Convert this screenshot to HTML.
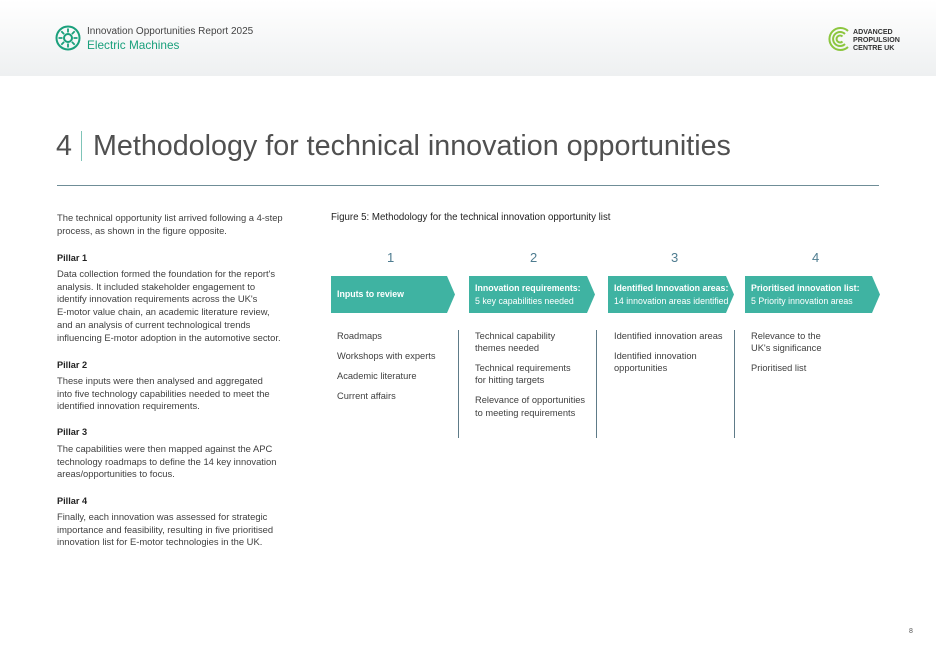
<!DOCTYPE html>
<html><head><meta charset="utf-8"><style>
*{margin:0;padding:0;box-sizing:border-box}
body{width:936px;height:662px;position:relative;background:#fff;font-family:"Liberation Sans",sans-serif;color:#3a3a3a;overflow:hidden}
.hdr{position:absolute;left:0;top:0;width:936px;height:76px;background:linear-gradient(#fff,#eef0f1)}
.a{position:absolute}
.t{font-size:9.4px;line-height:12.7px;color:#3f3f3f}
.i{font-size:9.3px;line-height:12px;color:#3f3f3f}
.b{font-weight:bold;font-size:9.2px;color:#222}
.arr{position:absolute;top:276px;height:37px;background:#3fb3a2;color:#fff;font-size:8.8px;font-weight:bold;line-height:13px;padding-left:6px;display:flex;flex-direction:column;justify-content:center;clip-path:polygon(0 0,calc(100% - 8px) 0,100% 50%,calc(100% - 8px) 100%,0 100%);white-space:nowrap}
.arr span{font-weight:normal}
.num{position:absolute;top:250px;font-size:13px;color:#4e7c90}
.vl{position:absolute;top:330px;height:108px;width:1px;background:#5e7b88}
</style></head><body>
<div class="hdr"></div>
<svg class="a" style="left:55px;top:25px" width="26" height="26" viewBox="0 0 26 26" fill="none" stroke="#1aa07c" stroke-width="2"><circle cx="13" cy="13" r="11.5"/><circle cx="13" cy="13" r="4"/><g stroke-width="1.8"><path d="M13 3.5v4M13 18.5v4M3.5 13h4M18.5 13h4M6.3 6.3l2.8 2.8M16.9 16.9l2.8 2.8M6.3 19.7l2.8-2.8M16.9 9.1l2.8-2.8"/></g></svg>
<div class="a" style="left:87px;top:26px;font-size:10px;color:#444">Innovation Opportunities Report 2025</div>
<div class="a" style="left:87px;top:38px;font-size:11.8px;color:#1aa07c">Electric Machines</div>
<svg class="a" style="left:826px;top:26px" width="26" height="26" viewBox="0 0 26 26" fill="none" stroke="#8cc63f" stroke-width="2"><path d="M22 5A11 11 0 1 0 22 21"/><path d="M19 8A7 7 0 1 0 19 18"/><path d="M16.5 10.5A3.5 3.5 0 1 0 16.5 15.5"/></svg>
<div class="a" style="left:853px;top:28px;font-size:7.1px;line-height:8px;color:#333;font-weight:bold">ADVANCED<br>PROPULSION<br>CENTRE UK</div>
<div class="a" style="left:56px;top:130px;font-size:28.7px;color:#505050">4</div>
<div class="a" style="left:81px;top:131px;width:1px;height:30px;background:#7fc4b8"></div>
<div class="a" style="left:93px;top:130px;font-size:28.7px;color:#505050">Methodology for technical innovation opportunities</div>
<div class="a" style="left:57px;top:185px;width:822px;height:1px;background:#6f8d97"></div>
<div class="a t" style="left:57px;top:212px;width:232px">The technical opportunity list arrived following a 4-step process, as shown in the figure opposite.</div>
<div class="a b" style="left:57px;top:253px">Pillar 1</div>
<div class="a t" style="left:57px;top:268px;width:260px">Data collection formed the foundation for the report's<br>analysis. It included stakeholder engagement to<br>identify innovation requirements across the UK's<br>E-motor value chain, an academic literature review,<br>and an analysis of current technological trends<br>influencing E-motor adoption in the automotive sector.</div>
<div class="a b" style="left:57px;top:360px">Pillar 2</div>
<div class="a t" style="left:57px;top:375px;width:222px">These inputs were then analysed and aggregated into five technology capabilities needed to meet the identified innovation requirements.</div>
<div class="a b" style="left:57px;top:496px">Pillar 4</div>
<div class="a b" style="left:57px;top:427px">Pillar 3</div>
<div class="a t" style="left:57px;top:443px;width:225px">The capabilities were then mapped against the APC technology roadmaps to define the 14 key innovation areas/opportunities to focus.</div>
<div class="a t" style="left:57px;top:511px;width:225px">Finally, each innovation was assessed for strategic importance and feasibility, resulting in five prioritised innovation list for E-motor technologies in the UK.</div>
<div class="a" style="left:331px;top:212px;font-size:9.7px;color:#222">Figure 5: Methodology for the technical innovation opportunity list</div>
<div class="num" style="left:387px">1</div><div class="num" style="left:530px">2</div><div class="num" style="left:671px">3</div><div class="num" style="left:812px">4</div>
<div class="arr" style="left:331px;width:124px">Inputs to review</div>
<div class="arr" style="left:469px;width:126px">Innovation requirements:<span>5 key capabilities needed</span></div>
<div class="arr" style="left:608px;width:126px">Identified Innovation areas:<span>14 innovation areas identified</span></div>
<div class="arr" style="left:745px;width:135px">Prioritised innovation list:<span>5 Priority innovation areas</span></div>
<div class="vl" style="left:458px"></div><div class="vl" style="left:596px"></div><div class="vl" style="left:734px"></div>
<div class="a i" style="left:337px;top:330px">Roadmaps</div>
<div class="a i" style="left:337px;top:350px">Workshops with experts</div>
<div class="a i" style="left:337px;top:370px">Academic literature</div>
<div class="a i" style="left:337px;top:390px">Current affairs</div>
<div class="a i" style="left:475px;top:330px">Technical capability<br>themes needed</div>
<div class="a i" style="left:475px;top:362px">Technical requirements<br>for hitting targets</div>
<div class="a i" style="left:475px;top:394px;line-height:13px">Relevance of opportunities<br>to meeting requirements</div>
<div class="a i" style="left:614px;top:330px">Identified innovation areas</div>
<div class="a i" style="left:614px;top:350px">Identified innovation<br>opportunities</div>
<div class="a i" style="left:751px;top:330px">Relevance to the<br>UK's significance</div>
<div class="a i" style="left:751px;top:362px">Prioritised list</div>
<div class="a" style="left:909px;top:628px;font-size:7px;color:#555">8</div>
</body></html>
